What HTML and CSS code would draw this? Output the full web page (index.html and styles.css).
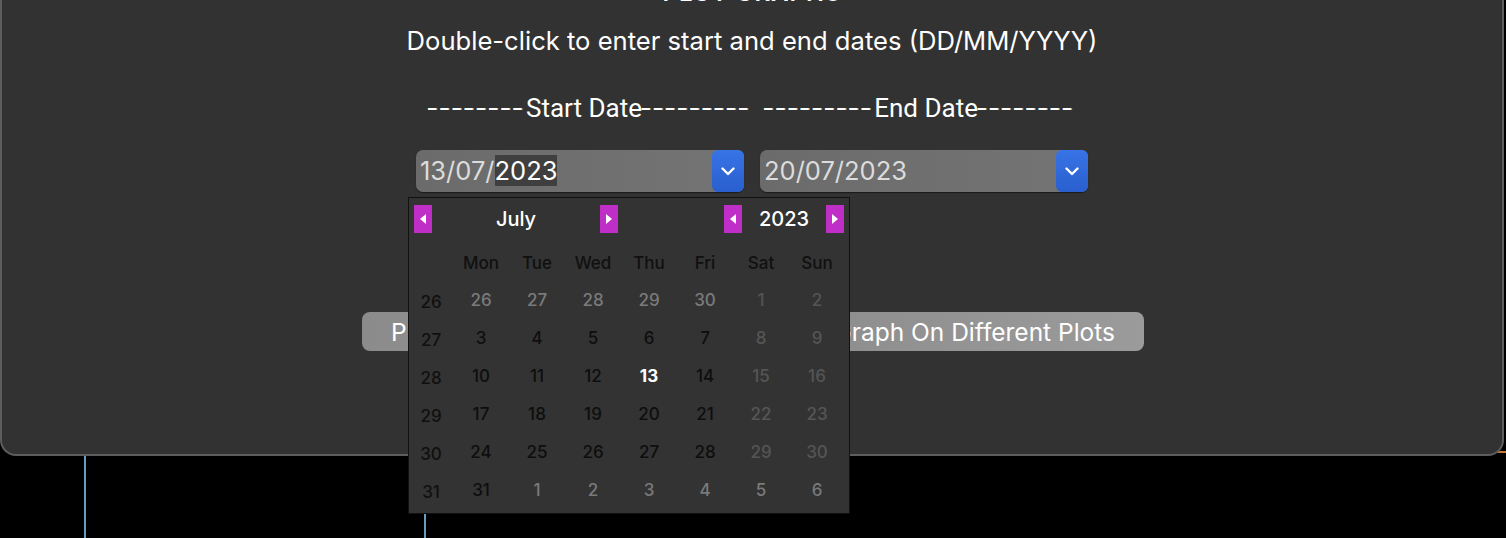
FILE: index.html
```html
<!DOCTYPE html>
<html>
<head>
<meta charset="utf-8">
<link rel="stylesheet" href="styles.css">
</head>
<body>
<div class="panel">
  <div class="title">PLOT GRAPHS</div>
  <div class="subtitle">Double-click to enter start and end dates (DD/MM/YYYY)</div>
  <div class="dash-line"><span class="dashes">--------</span>Start Date<span class="dashes">---------</span>&nbsp; <span class="dashes">---------</span>End Date<span class="dashes">--------</span></div>
  <div class="combos">
    <div class="combo">
      <div class="combo-text">13/07/<span class="sel">2023</span></div>
      <div class="combo-btn"><svg width="14" height="9" viewBox="0 0 14 9"><path d="M1.5 1.5 L7 7 L12.5 1.5" fill="none" stroke="#fff" stroke-width="2.4" stroke-linecap="round" stroke-linejoin="round"/></svg></div>
      <div class="calendar">
        <div class="cal-head">
          <div class="arrow"><svg width="6" height="10" viewBox="0 0 6 10"><path d="M6 0 L0 5 L6 10Z" fill="#fff"/></svg></div>
          <div class="cal-month">July</div>
          <div class="arrow"><svg width="6" height="10" viewBox="0 0 6 10"><path d="M0 0 L6 5 L0 10Z" fill="#fff"/></svg></div>
          <div class="cal-spacer"></div>
          <div class="arrow"><svg width="6" height="10" viewBox="0 0 6 10"><path d="M6 0 L0 5 L6 10Z" fill="#fff"/></svg></div>
          <div class="cal-year">2023</div>
          <div class="arrow"><svg width="6" height="10" viewBox="0 0 6 10"><path d="M0 0 L6 5 L0 10Z" fill="#fff"/></svg></div>
        </div>
        <div class="cal-grid">
          <div></div><div class="dn">Mon</div><div class="dn">Tue</div><div class="dn">Wed</div><div class="dn">Thu</div><div class="dn">Fri</div><div class="dn">Sat</div><div class="dn">Sun</div>

          <div class="wk">26</div><div class="oth">26</div><div class="oth">27</div><div class="oth">28</div><div class="oth">29</div><div class="oth">30</div><div class="we">1</div><div class="we">2</div>
          <div class="wk">27</div><div class="cur">3</div><div class="cur">4</div><div class="cur">5</div><div class="cur">6</div><div class="cur">7</div><div class="we">8</div><div class="we">9</div>
          <div class="wk">28</div><div class="cur">10</div><div class="cur">11</div><div class="cur">12</div><div class="today">13</div><div class="cur">14</div><div class="we">15</div><div class="we">16</div>
          <div class="wk">29</div><div class="cur">17</div><div class="cur">18</div><div class="cur">19</div><div class="cur">20</div><div class="cur">21</div><div class="we">22</div><div class="we">23</div>
          <div class="wk">30</div><div class="cur">24</div><div class="cur">25</div><div class="cur">26</div><div class="cur">27</div><div class="cur">28</div><div class="we">29</div><div class="we">30</div>
          <div class="wk">31</div><div class="cur">31</div><div class="oth">1</div><div class="oth">2</div><div class="oth">3</div><div class="oth">4</div><div class="oth">5</div><div class="oth">6</div>
        </div>
      </div>
    </div>
    <div class="combo">
      <div class="combo-text">20/07/2023</div>
      <div class="combo-btn"><svg width="14" height="9" viewBox="0 0 14 9"><path d="M1.5 1.5 L7 7 L12.5 1.5" fill="none" stroke="#fff" stroke-width="2.4" stroke-linecap="round" stroke-linejoin="round"/></svg></div>
    </div>
  </div>
  <div class="buttons">
    <div class="btn btn-left">Plot Graph On Same Plot</div>
    <div class="btn btn-right">Plot Graph On Different Plots</div>
  </div>
</div>
<div class="backdrop">
  <div class="vline vline-a"></div>
  <div class="vline vline-b"></div>
  <div class="orange"></div>
</div>
</body>
</html>
```

FILE: styles.css
```css
html, body {
  margin: 0;
  padding: 0;
  background: #000;
  font-family: "Inter", "Noto Sans", sans-serif;
  overflow: hidden;
}

.panel {
  position: relative;
  z-index: 2;
  width: 1500px;
  height: 454px;
  background: #323232;
  border: 2px solid #5d5d5d;
  border-top: none;
  border-radius: 0 0 16px 16px;
  display: flex;
  flex-direction: column;
  align-items: center;
  color: #fff;
}

.title {
  font-size: 24px;
  font-weight: 600;
  line-height: 28px;
  margin-top: -21px;
  letter-spacing: 1px;
}

.subtitle {
  font-size: 25.6px;
  line-height: 30px;
  margin-top: 19px;
}

.dash-line {
  font-family: "Roboto", "Noto Sans", sans-serif;
  font-size: 26px;
  line-height: 30px;
  margin-top: 37px;
  white-space: pre;
}

.dashes {
  letter-spacing: 5px;
  text-shadow: 1px 0 #fff, -1px 0 #fff, 2px 0 rgba(255,255,255,0.5);
}

.combos {
  display: flex;
  gap: 16px;
  margin-top: 27px;
}

.combo {
  position: relative;
  width: 328px;
  height: 42px;
  border-radius: 7px;
  background: linear-gradient(90deg, #6b6b6b, #747474);
  box-shadow: 0 1px 1px rgba(0,0,0,0.5);
  display: flex;
  align-items: center;
  justify-content: space-between;
}

.combo-text {
  font-size: 25.5px;
  color: #dcdcdc;
  padding-left: 4px;
  line-height: 32px;
}

.sel {
  background: #3f3f3f;
  color: #fff;
}

.combo-btn {
  width: 32px;
  height: 42px;
  border-radius: 6px;
  background: linear-gradient(180deg, #3774e6, #2a5fce);
  display: flex;
  align-items: center;
  justify-content: center;
}

.calendar {
  position: absolute;
  z-index: 5;
  left: -8px;
  top: 47px;
  width: 440px;
  height: 315px;
  background: #333;
  border: 1px solid #111;
}

.cal-head {
  display: flex;
  align-items: center;
  height: 28px;
  margin: 7px 5px 0 5px;
}

.arrow {
  width: 18px;
  height: 28px;
  background: #bf2ec6;
  display: flex;
  align-items: center;
  justify-content: center;
}

.cal-month {
  width: 168px;
  text-align: center;
  font-size: 20px;
  font-weight: 500;
}

.cal-spacer {
  width: 106px;
}

.cal-year {
  width: 84px;
  text-align: center;
  font-size: 20px;
  font-weight: 500;
}

.cal-grid {
  display: grid;
  grid-template-columns: 44px repeat(7, 56px);
  grid-auto-rows: 38px;
  margin-top: 10px;
  font-size: 17px;
  font-weight: 500;
  color: #121212;
}

.cal-grid > div {
  display: flex;
  align-items: center;
  justify-content: center;
}

.dn { color: #101010; padding-top: 2px; }
.cur { color: #0e0e0e; }
.oth { color: #7a7a7a; }
.we { color: #555; }
.today { color: #fff; font-weight: 700; }
.wk { color: #101010; padding-top: 4px; }

.buttons {
  display: flex;
  gap: 52px;
  margin-top: 120px;
  margin-left: 2px;
}

.btn {
  height: 39px;
  border-radius: 8px;
  background: linear-gradient(90deg, #8b8b8b, #9b9b9b);
  color: #fff;
  font-size: 24.5px;
  display: flex;
  align-items: center;
  padding: 0 29px;
  box-sizing: border-box;
  white-space: nowrap;
  overflow: hidden;
}

.btn-left { width: 340px; }
.btn-right { width: 390px; justify-content: flex-end; }

.backdrop {
  position: relative;
  height: 85px;
  margin-top: -2px;
}

.vline {
  position: absolute;
  top: 0;
  bottom: 0;
  width: 2px;
  background: #6b9cbd;
}

.vline-a { left: 84px; }
.vline-b { left: 424px; }

.orange {
  position: absolute;
  top: -3px;
  right: 0;
  width: 12px;
  height: 2px;
  background: #c8782e;
}
```
